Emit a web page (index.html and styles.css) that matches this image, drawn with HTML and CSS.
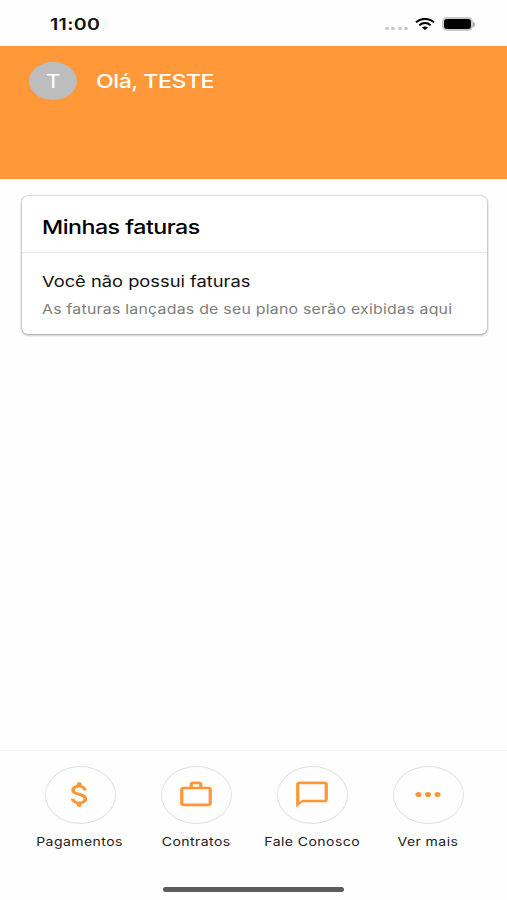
FILE: index.html
```html
<!DOCTYPE html>
<html lang="pt-BR">
<head>
    <meta charset="UTF-8">
    <meta name="viewport" content="width=device-width, initial-scale=1.0">
    <title>Minhas faturas</title>
    <link rel="stylesheet" href="styles.css">
</head>
<body>
<div class="status-bar">
    <div class="time"><span class="wide">11:00</span></div>
    <div class="status-icons">
        <div class="signal"><i></i><i></i><i></i><i></i></div>
        <svg class="wifi" viewBox="0 0 20 12" preserveAspectRatio="none" fill="none" stroke="#000" stroke-width="2.1">
            <path d="M1 4.3C6-.2 14-.2 19 4.3"/>
            <path d="M4.3 7.3c3.4-2.9 8-2.9 11.4 0"/>
            <path d="M7 9.6c1.6-1.6 4.4-1.6 6 0L10 12z" fill="#000" stroke="none"/>
        </svg>
        <div class="battery"></div>
        <div class="battery-tip"></div>
    </div>
</div>

<div class="header">
    <div class="avatar"><span class="wide">T</span></div>
    <div class="hello"><span class="wide">Olá, TESTE</span></div>
</div>

<div class="content">
    <div class="card">
        <div class="card-title"><span class="wide">Minhas faturas</span></div>
        <div class="card-body">
            <div class="card-text"><span class="wide">Você não possui faturas</span></div>
            <div class="card-note"><span class="wide">As faturas lançadas de seu plano serão exibidas aqui</span></div>
        </div>
    </div>
</div>

<div class="menu">
    <div class="menu-item">
        <div class="circle">
            <svg class="dollar" viewBox="0 0 24 24" preserveAspectRatio="none"><path d="M11.8 10.9c-2.27-.59-3-1.2-3-2.15 0-1.09 1.01-1.85 2.7-1.85 1.78 0 2.44.85 2.5 2.1h2.21c-.07-1.72-1.12-3.3-3.21-3.81V4.2c0-1.6-3-1.6-3 0v.96c-1.94.42-3.5 1.68-3.5 3.61 0 2.31 1.91 3.46 4.7 4.13 2.5.6 3 1.48 3 2.41 0 .69-.49 1.79-2.7 1.79-2.06 0-2.87-.92-2.98-2.1h-2.2c.12 2.19 1.76 3.42 3.68 3.83v.97c0 1.6 3 1.6 3 0v-.95c1.95-.37 3.5-1.5 3.5-3.55 0-2.84-2.43-3.81-4.7-4.4z"/></svg>
        </div>
        <span class="wide">Pagamentos</span>
    </div>
    <div class="menu-item">
        <div class="circle">
            <svg viewBox="0 0 24 24" preserveAspectRatio="none"><path fill-rule="evenodd" d="M14 6V4h-4v2h4zM4 8v11h16V8H4zm16-2c1.11 0 2 .89 2 2v11c0 1.11-.89 2-2 2H4c-1.11 0-2-.89-2-2l.01-11c0-1.11.88-2 1.99-2h4V4c0-1.11.89-2 2-2h4c1.11 0 2 .89 2 2v2h4z"/></svg>
        </div>
        <span class="wide">Contratos</span>
    </div>
    <div class="menu-item">
        <div class="circle">
            <svg viewBox="0 0 24 24" preserveAspectRatio="none"><path d="M20 2H4c-1.1 0-2 .9-2 2v18l4-4h14c1.1 0 2-.9 2-2V4c0-1.1-.9-2-2-2zm0 14H6l-2 2V4h16v12z"/></svg>
        </div>
        <span class="wide">Fale Conosco</span>
    </div>
    <div class="menu-item">
        <div class="circle">
            <svg viewBox="0 0 24 24" preserveAspectRatio="none"><path d="M6 10c-1.1 0-2 .9-2 2s.9 2 2 2 2-.9 2-2-.9-2-2-2zm12 0c-1.1 0-2 .9-2 2s.9 2 2 2 2-.9 2-2-.9-2-2-2zm-6 0c-1.1 0-2 .9-2 2s.9 2 2 2 2-.9 2-2-.9-2-2-2z"/></svg>
        </div>
        <span class="wide">Ver mais</span>
    </div>
</div>
<div class="home-bar"></div>
</body>
</html>
```
FILE: styles.css
```css
* {
    box-sizing: border-box;
}
body {
    margin: 0;
    height: 900px;
    display: flex;
    flex-direction: column;
    background-color: #fefefe;
    color: #111;
    font-family: Inter, "Liberation Sans", sans-serif;
    overflow: hidden;
}
/* extended lettering */
.wide {
    display: inline-block;
    white-space: nowrap;
    transform: scaleX(1.22);
    transform-origin: left center;
}
.status-bar {
    height: 46px;
    padding: 0 32px 0 50px;
    display: flex;
    justify-content: space-between;
}
.time {
    padding-top: 14px;
    font-size: 16px;
    line-height: 21px;
    font-weight: 600;
    letter-spacing: 0.3px;
}
.status-icons {
    display: flex;
    align-items: center;
    height: 48px;
}
.signal {
    display: flex;
    gap: 2.5px;
    margin: 9px 7px 0 0;
}
.signal i {
    width: 4px;
    height: 3.5px;
    border-radius: 50%;
    background-color: #c8c8c8;
}
.wifi {
    width: 20px;
    height: 12px;
    margin-right: 7px;
}
.battery {
    width: 31px;
    height: 14px;
    border: 2px solid #c9c9c9;
    border-radius: 5px;
    background-color: #000;
}
.battery-tip {
    width: 2px;
    height: 5px;
    border-radius: 0 2px 2px 0;
    background-color: #aaa;
}
.header {
    height: 133px;
    padding: 16px 29px;
    display: flex;
    align-items: flex-start;
    background-color: #ff9838;
    color: #fff;
}
.avatar {
    width: 48px;
    height: 38px;
    margin-right: 19px;
    border-radius: 50%;
    background-color: #bdbdbd;
    font-size: 19px;
    line-height: 40px;
    text-align: center;
}
.avatar .wide {
    transform-origin: center;
}
.hello {
    font-size: 19px;
    line-height: 40px;
    font-weight: 500;
    letter-spacing: -0.4px;
}
.content {
    flex: 1;
    padding: 17px 20px 0 22px;
}
.card {
    height: 138px;
    border-radius: 6px;
    background-color: #fff;
    box-shadow: 0 1px 3px rgba(0, 0, 0, 0.35), 0 0 2px rgba(0, 0, 0, 0.3);
}
.card-title {
    height: 57px;
    padding-left: 20px;
    border-bottom: 1px solid #e8eaea;
    font-size: 19px;
    line-height: 64px;
    font-weight: 500;
    letter-spacing: -0.4px;
    color: #000;
}
.card-body {
    padding: 18px 0 0 20px;
}
.card-text {
    font-size: 15px;
    line-height: 22px;
}
.card-note {
    margin-top: 6px;
    font-size: 13px;
    line-height: 20px;
    letter-spacing: 0.2px;
    color: #7d7d7d;
}
.menu {
    height: 117px;
    padding: 15px 20px 0 22px;
    display: flex;
    border-top: 1px solid #f4f4f4;
}
.menu-item {
    width: 116px;
    display: flex;
    flex-direction: column;
    align-items: center;
    font-size: 11.5px;
    line-height: 17px;
    letter-spacing: 0.35px;
    color: #222;
}
.menu-item .wide {
    transform-origin: center;
}
.circle {
    width: 71px;
    height: 58px;
    margin-bottom: 10px;
    display: flex;
    align-items: center;
    justify-content: center;
    border: 1px solid #e2e2e2;
    border-radius: 50%;
}
.circle svg {
    width: 38px;
    height: 31px;
    margin-bottom: 1px;
    fill: #ff9535;
}
.circle .dollar {
    height: 33px;
}
.home-bar {
    width: 181px;
    height: 5px;
    margin: 20px auto 8px;
    border-radius: 3px;
    background-color: #5c5c5c;
}
```
